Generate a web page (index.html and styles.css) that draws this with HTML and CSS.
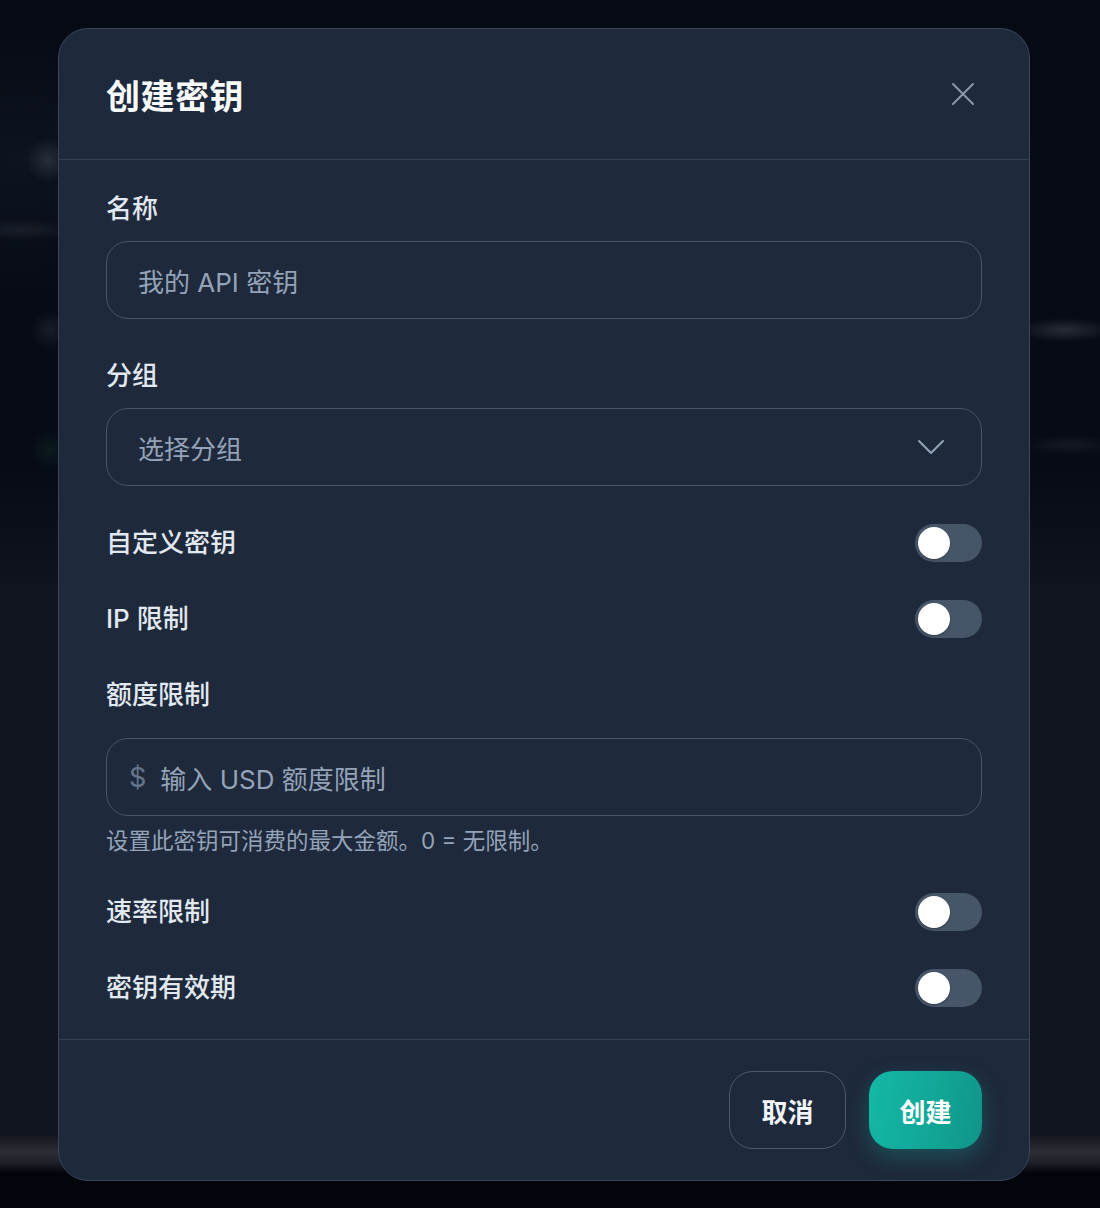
FILE: index.html
```html
<!DOCTYPE html>
<html lang="zh-CN">
<head>
<meta charset="utf-8">
<title>创建密钥</title>
<link rel="stylesheet" href="styles.css">
</head>
<body>
<div class="backdrop">
  <div class="page-top"></div>
  <div class="page-mid"></div>
  <div class="page-bar"></div>
  <div class="page-bottom"></div>
</div>

<div class="modal">
  <div class="modal-header">
    <h2 class="modal-title">创建密钥</h2>
    <button class="close-btn" aria-label="关闭">
      <svg width="24" height="24" viewBox="0 0 24 24" fill="none" stroke="currentColor" stroke-width="2" stroke-linecap="round">
        <path d="M2 2 L22 22 M22 2 L2 22"/>
      </svg>
    </button>
  </div>

  <div class="modal-body">
    <div class="field">
      <label class="field-label">名称</label>
      <div class="input"><span class="placeholder">我的 API 密钥</span></div>
    </div>

    <div class="field">
      <label class="field-label">分组</label>
      <div class="input select">
        <span class="placeholder">选择分组</span>
        <svg class="chevron" width="28" height="16" viewBox="0 0 28 16" fill="none" stroke="currentColor" stroke-width="2" stroke-linecap="round" stroke-linejoin="round">
          <path d="M2 2 L14 14 L26 2"/>
        </svg>
      </div>
    </div>

    <div class="toggle-row">
      <span class="field-label">自定义密钥</span>
      <span class="toggle"><span class="knob"></span></span>
    </div>

    <div class="toggle-row">
      <span class="field-label">IP 限制</span>
      <span class="toggle"><span class="knob"></span></span>
    </div>

    <div class="field">
      <label class="field-label label-wide">额度限制</label>
      <div class="input quota">
        <span class="dollar">$</span>
        <span class="placeholder">输入 USD 额度限制</span>
      </div>
      <p class="help">设置此密钥可消费的最大金额。0 = 无限制。</p>
    </div>

    <div class="toggle-row">
      <span class="field-label">速率限制</span>
      <span class="toggle"><span class="knob"></span></span>
    </div>

    <div class="toggle-row">
      <span class="field-label">密钥有效期</span>
      <span class="toggle"><span class="knob"></span></span>
    </div>
  </div>

  <div class="modal-footer">
    <button class="btn btn-cancel">取消</button>
    <button class="btn btn-primary">创建</button>
  </div>
</div>
</body>
</html>
```

FILE: styles.css
```css
* { box-sizing: border-box; }

html, body {
  margin: 0;
  padding: 0;
}

body {
  width: 1100px;
  height: 1208px;
  overflow: hidden;
  position: relative;
  background: #04070f;
  font-family: Inter, "Noto Sans CJK SC", "Noto Sans", sans-serif;
}

/* blurred page behind the dialog */
.backdrop {
  display: flex;
  flex-direction: column;
  height: 1208px;
}

.page-top {
  height: 600px;
  background:
    radial-gradient(circle at 48px 160px, rgba(120,125,135,0.26), transparent 22px),
    radial-gradient(ellipse 60px 10px at 20px 230px, rgba(120,125,135,0.14), transparent),
    radial-gradient(circle at 50px 330px, rgba(120,125,135,0.16), transparent 20px),
    radial-gradient(circle at 50px 450px, rgba(40,110,70,0.16), transparent 20px),
    radial-gradient(ellipse 50px 12px at 1065px 330px, rgba(130,135,145,0.26), transparent),
    radial-gradient(ellipse 50px 10px at 1070px 445px, rgba(120,125,135,0.12), transparent),
    radial-gradient(ellipse 160px 140px at 20px 160px, rgba(60,70,90,0.16), transparent),
    linear-gradient(180deg, #050a14 0%, #060b15 78%, #0e121a 94%, #11151d 100%);
}

.page-mid {
  flex: 1;
  background: #11151d;
}

.page-bar {
  height: 36px;
  background: linear-gradient(180deg, #15181f 0%, #2b2e34 45%, #1c1f25 75%, #05070d 100%);
}

.page-bottom {
  height: 36px;
  background: #03050c;
}

/* dialog */
.modal {
  position: absolute;
  top: 28px;
  left: 58px;
  width: 972px;
  background: #1e293b;
  border: 1px solid #3a475c;
  border-radius: 30px;
  overflow: hidden;
}

.modal-header {
  height: 131px;
  padding: 0 47px;
  display: flex;
  align-items: center;
  justify-content: space-between;
  border-bottom: 1px solid #334155;
}

.modal-title {
  margin: 0;
  font-size: 34px;
  font-weight: 700;
  color: #f8fafc;
  letter-spacing: 0.5px;
}

.close-btn {
  background: none;
  border: none;
  padding: 0;
  margin-right: 7px;
  width: 24px;
  height: 24px;
  color: #8c98aa;
  display: flex;
}

.modal-body {
  padding: 30px 47px 32px;
  display: flex;
  flex-direction: column;
  gap: 38px;
}

.field {
  display: flex;
  flex-direction: column;
}

.field-label {
  font-size: 26px;
  line-height: 38px;
  font-weight: 500;
  color: #e2e8f0;
}

.field .field-label {
  margin-bottom: 13px;
}

.field .label-wide {
  margin-bottom: 24px;
}

.input {
  height: 78px;
  border: 1.5px solid #475569;
  border-radius: 22px;
  padding: 0 31px;
  display: flex;
  align-items: center;
}

.placeholder {
  font-size: 26px;
  color: #94a3b8;
}

.select {
  justify-content: space-between;
  padding-right: 36px;
}

.chevron {
  color: #94a3b8;
}

.quota {
  padding-left: 22px;
  gap: 14px;
}

.dollar {
  font-size: 27px;
  color: #64748b;
}

.help {
  margin: 11px 0 0;
  font-size: 22.5px;
  line-height: 28px;
  color: #94a3b8;
}

.toggle-row {
  height: 38px;
  display: flex;
  align-items: center;
  justify-content: space-between;
}

.toggle {
  width: 67px;
  height: 38px;
  border-radius: 19px;
  background: #475569;
  display: flex;
  align-items: center;
  padding-left: 3px;
}

.knob {
  width: 32px;
  height: 32px;
  border-radius: 50%;
  background: #ffffff;
  box-shadow: 0 1px 2px rgba(0,0,0,0.3);
}

.modal-footer {
  border-top: 1px solid #334155;
  padding: 31px 47px;
  display: flex;
  justify-content: flex-end;
  gap: 23px;
}

.btn {
  height: 78px;
  border-radius: 24px;
  font-family: Inter, "Noto Sans CJK SC", sans-serif;
  font-size: 26px;
  font-weight: 700;
  color: #f1f5f9;
  padding: 0;
}

.btn-cancel {
  width: 117px;
  background: transparent;
  border: 1.5px solid #4b5a70;
}

.btn-primary {
  width: 113px;
  border: none;
  color: #ffffff;
  background: linear-gradient(100deg, #14b8a6 0%, #12a596 60%, #0f9488 100%);
  box-shadow: 0 8px 22px rgba(20, 184, 166, 0.28);
}
```
